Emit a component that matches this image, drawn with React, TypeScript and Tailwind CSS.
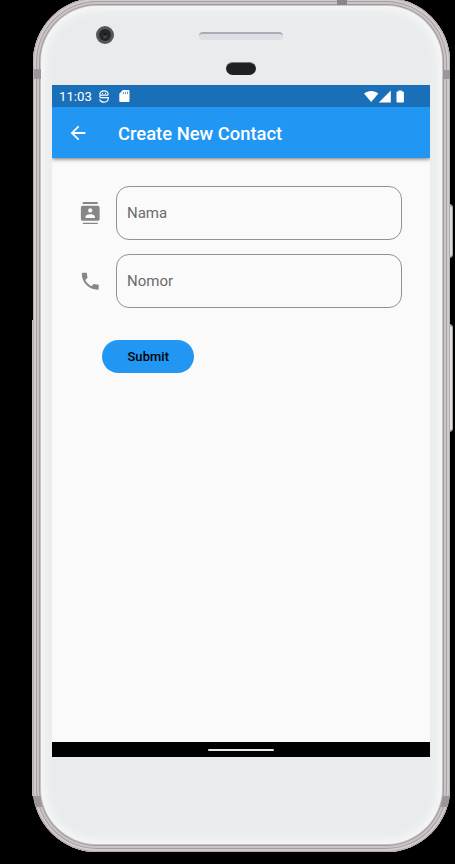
import React from 'react';

const ContactsIcon = () => (
  <svg viewBox="0 0 24 24" className="h-[22.500px] w-[22.500px] shrink-0 fill-[#868686]">
    <path d="M20 0H4v2h16V0zM4 24h16v-2H4v2zM20 4H4c-1.100 0-2 .9-2 2v12c0 1.100.9 2 2 2h16c1.100 0 2-.9 2-2V6c0-1.100-.9-2-2-2zm-8 2.750c1.240 0 2.250 1.010 2.250 2.250s-1.010 2.250-2.250 2.250S9.750 10.240 9.750 9 10.760 6.750 12 6.750zM17 17H7v-1.500c0-1.670 3.330-2.500 5-2.500s5 .83 5 2.500V17z" />
  </svg>
);

const PhoneIcon = () => (
  <svg viewBox="0 0 24 24" className="h-[22.500px] w-[22.500px] shrink-0 fill-[#868686]">
    <path d="M6.620 10.790c1.440 2.830 3.760 5.140 6.590 6.590l2.200-2.200c.27-.27.67-.36 1.020-.24 1.120.37 2.330.57 3.570.57.55 0 1 .45 1 1V20c0 .55-.45 1-1 1-9.390 0-17-7.610-17-17 0-.55.45-1 1-1h3.500c.55 0 1 .45 1 1 0 1.250.2 2.450.57 3.570.11.35.03.74-.25 1.020l-2.200 2.200z" />
  </svg>
);

const Field = ({ icon, label }: { icon: React.ReactNode; label: string }) => (
  <div className="flex h-[54px] items-center">
    {icon}
    <div className="ml-[14.300px] flex h-[54px] w-[286px] items-center rounded-[13px] border border-[#929292] pl-[10px] text-[15px] text-[#6a6a6a]">
      {label}
    </div>
  </div>
);

const StatusBar = () => (
  <div className="flex h-[22px] items-center bg-[#1a70b8] pl-[7px] pr-[24.500px] text-[13.2px] text-white">
    <span className="w-[33px] whitespace-nowrap pt-[2px] leading-[22px]">11:03</span>
    <svg viewBox="0 0 10 13" className="ml-[7px] h-[13px] w-[10px]" fill="none" stroke="white" strokeWidth="1.2">
      <path d="M.8 4.700C.8 2 2.500.8 5 .8s4.200 1.200 4.200 3.900M3 3.300h1M6 3.300h1M9.200 5.200H2C.4 5.200.4 7.600 2 7.600h7.200v1.200C9.200 11 7 12.200 5 12.200S.8 11 .8 9.200" />
    </svg>
    <svg viewBox="0 0 11 12" className="ml-[10px] h-[12px] w-[11px]">
      <path d="M3.800 0H9.500q1 0 1 1V11q0 1-1 1H1.300q-1 0-1-1V3.700z" fill="white" />
      <path d="M4.500 2v2.200M6.500 1.700v2.500M8.500 1.700v2.500" stroke="#1a70b8" strokeWidth=".7" />
    </svg>
    <svg viewBox="0 0 42 13" className="ml-auto h-[13px] w-[42px]" fill="white">
      <path d="M0 3.500C4 .1 10.400.1 14.300 3.500L7.200 12z" />
      <path d="M26.800 .5V12.500H14.800z" />
      <path d="M34.500 1.500V.5h3.400v1h1.300q.7 0 .7.700v9.600q0 .7-.7.700h-6q-.7 0-.7-.7V2.200q0-.7.700-.7z" />
    </svg>
  </div>
);

const Screen = () => (
  <div className="flex h-[672px] w-[378px] flex-col bg-[#fafafa]">
    <StatusBar />
    <header className="flex h-[51px] items-center bg-[#2196f3] pl-[15px] text-white shadow-[0_1px_4px_rgba(0,0,0,0.55)] [clip-path:inset(0_0_-6px_0)]">
      <svg viewBox="0 0 24 24" className="h-[22px] w-[22px]" fill="white">
        <path d="M20 11H7.830l5.590-5.590L12 4l-8 8 8 8 1.410-1.410L7.830 13H20v-2z" />
      </svg>
      <h1 className="ml-[29px] whitespace-nowrap pt-[2px] text-[18.4px] font-medium">Create New Contact</h1>
    </header>
    <main className="flex flex-1 flex-col pl-[27.200px] pt-[28px]">
      <div className="flex flex-col gap-[14px]">
        <Field icon={<ContactsIcon />} label="Nama" />
        <Field icon={<PhoneIcon />} label="Nomor" />
      </div>
      <button className="ml-[23.100px] mt-[32px] h-[33px] w-[92px] rounded-full bg-[#2196f3] pt-px text-[12.900px] font-medium tracking-[0.1px] text-black">
        Submit
      </button>
    </main>
    <div className="flex h-[15px] items-center justify-center bg-black">
      <div className="h-[2px] w-[66px] rounded-full bg-[#e8e8e8]" />
    </div>
  </div>
);

export default function App() {
  return (
    <div className="relative h-[864px] w-[455px] overflow-hidden bg-black font-['Roboto','Liberation_Sans',sans-serif]">
      {/* side keys */}
      <div className="absolute left-[449px] top-[204px] h-[54px] w-[4px] rounded-r-sm border-y-2 border-r border-[#aaa5a7] bg-[#d8dadc]" />
      <div className="absolute left-[449px] top-[324px] h-[108px] w-[4px] rounded-r-sm border-y-2 border-r border-[#aaa5a7] bg-[#e2e0e2]" />
      <div className="absolute left-[32px] top-[320px] h-[476px] w-[3px] bg-[#c3bbbe]" />
      {/* metal rim */}
      <div className="relative -mt-[2px] ml-[33px] h-[854px] w-[417px] rounded-[64px] bg-[#c9c2c5] p-[8px] shadow-[inset_0_0_0_1px_#b3acae,inset_0_0_0_3px_#d3cccf,inset_0_0_0_4px_#a59ea1,inset_0_0_0_6px_#cbc4c7,inset_0_0_0_7px_#a29b9e]">
        <div className="absolute left-[1px] top-[71px] h-[10px] w-[7px] bg-[#9b9699]" />
        <div className="absolute right-0 top-[72px] h-[9px] w-[7px] bg-[#9b9699]" />
        <div className="absolute left-[304px] top-[2px] h-[5px] w-[10px] bg-[#8b8588]" />
        <div className="absolute left-[1px] top-[798px] h-[11px] w-[7px] -skew-x-[-12deg] bg-[#9b9699]" />
        <div className="absolute right-[1px] top-[798px] h-[11px] w-[7px] -skew-x-12 bg-[#9b9699]" />
        {/* glass face */}
        <div className="relative flex h-[838px] w-[401px] flex-col items-start rounded-[56px] bg-[#eaebed] shadow-[inset_0_0_8px_4px_#f6f7f9]">
          <div className="flex h-[79px] w-full flex-col items-center pr-px pt-[26px]">
            <div className="h-[8px] w-[84px] rounded-[4px] border-t-2 border-[#a7acb5] bg-[#dcdfe4]" />
            <div className="mt-[22px] h-[13px] w-[30px] rounded-full border-t border-[#777] bg-[#1e2023]" />
          </div>
          <div className="absolute left-[55px] top-[20px] flex h-[18px] w-[18px] items-center justify-center rounded-full bg-[#55565a]">
            <div className="flex h-[12px] w-[12px] items-center justify-center rounded-full bg-[#252629]">
              <div className="h-[5px] w-[4px] rounded-full bg-gradient-to-b from-[#08090d] to-[#65602e]" />
            </div>
          </div>
          <div className="ml-[11px]">
            <Screen />
          </div>
        </div>
      </div>
    </div>
  );
}
